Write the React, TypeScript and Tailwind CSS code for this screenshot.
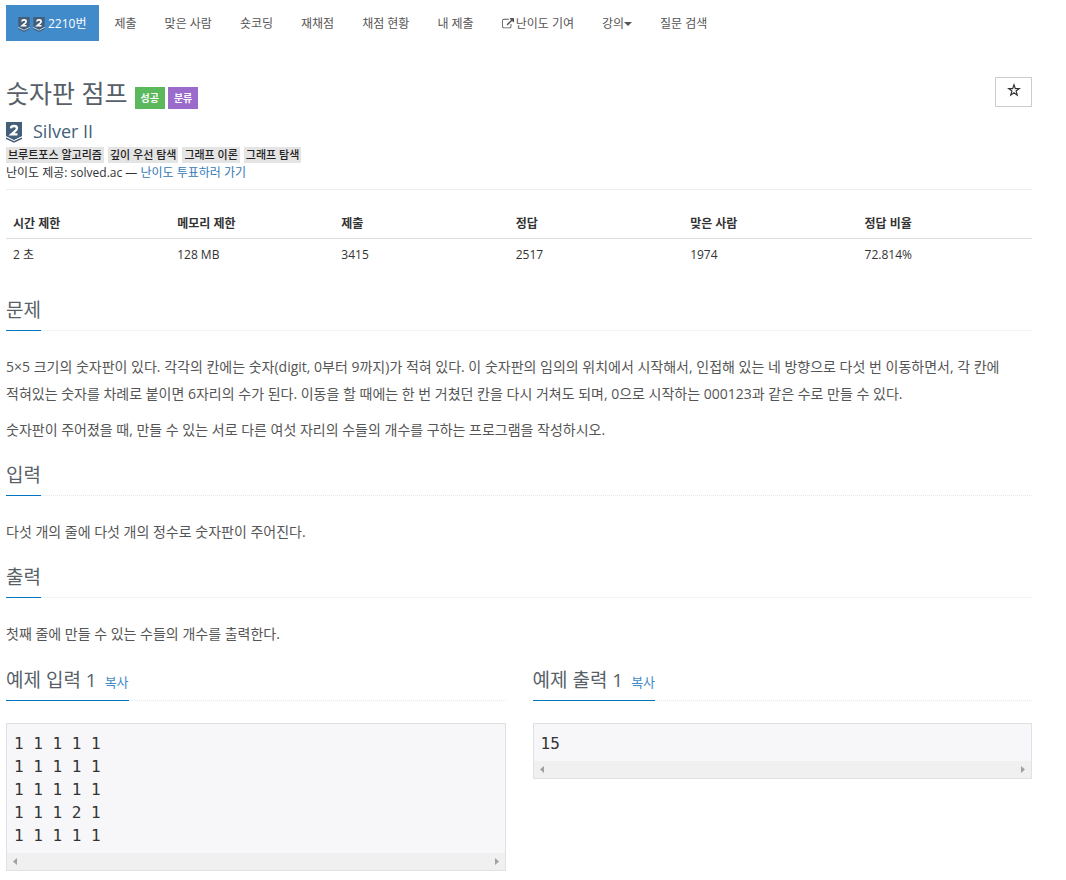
import React from 'react';

const NAV_LEFT = ['제출', '맞은 사람', '숏코딩', '재채점', '채점 현황', '내 제출'];
const TAGS = ['브루트포스 알고리즘', '깊이 우선 탐색', '그래프 이론', '그래프 탐색'];
const INFO = [
  { label: '시간 제한', value: '2 초', width: 'w-[16%]' },
  { label: '메모리 제한', value: '128 MB', width: 'w-[16%]' },
  { label: '제출', value: '3415', width: 'w-[17%]' },
  { label: '정답', value: '2517', width: 'w-[17%]' },
  { label: '맞은 사람', value: '1974', width: 'w-[17%]' },
  { label: '정답 비율', value: '72.814%', width: 'w-[17%]' },
];
const SAMPLE_INPUT = '1 1 1 1 1\n1 1 1 1 1\n1 1 1 1 1\n1 1 1 2 1\n1 1 1 1 1';

const TierIcon: React.FC<{ className: string }> = ({ className }) => (
  <svg viewBox="0 0 16 21" className={className} aria-hidden="true">
    <path d="M0 0h16v14.500L8 18.500 0 14.500z" fill="#435f7a" />
    <path d="M0 14.800l8 4 8-4" fill="none" stroke="#fff" strokeWidth="1.300" />
    <path d="M0 16.200l8 3.800 8-3.800" fill="none" stroke="#435f7a" strokeWidth="1.500" />
    <path d="M4.900 6.300C5.100 4.700 6.300 4 8 4c1.800 0 3 .9 3 2.300 0 1.200-.8 2-2.200 3.100L5.500 12.300h6" fill="none" stroke="#fff" strokeWidth="2.300" />
  </svg>
);

const ExternalLinkIcon = () => (
  <svg viewBox="0 0 1792 1792" className="mr-0.5 size-3" fill="currentColor" aria-hidden="true">
    <path d="M1408 928v320q0 119-84.5 203.5t-203.5 84.5h-832q-119 0-203.5-84.5t-84.5-203.5v-832q0-119 84.5-203.5t203.5-84.5h704q14 0 23 9t9 23v64q0 14-9 23t-23 9h-704q-66 0-113 47t-47 113v832q0 66 47 113t113 47h832q66 0 113-47t47-113v-320q0-14 9-23t23-9h64q14 0 23 9t9 23zm384-864v512q0 26-19 45t-45 19-45-19l-176-176-652 652q-10 10-23 10t-23-10l-114-114q-10-10-10-23t10-23l652-652-176-176q-19-19-19-45t19-45 45-19h512q26 0 45 19t19 45z" />
  </svg>
);

const NavLink: React.FC<{ children: React.ReactNode }> = ({ children }) => (
  <a href="#" className="flex h-9 items-center px-[13px] pt-0.5 whitespace-nowrap hover:bg-gray-100">{children}</a>
);

const Heading: React.FC<{ title: string; copy?: boolean }> = ({ title, copy }) => (
  <div className="mt-4 mb-[22px] flex">
    <div className="flex items-baseline gap-2 border-b border-[#0076bd] pb-1">
      <h2 className="text-[19px] leading-8 text-[#585f69]">{title}</h2>
      {copy && <button type="button" className="cursor-pointer text-[13px] text-[#428bca]">복사</button>}
    </div>
    <div className="flex-1 border-b border-dotted border-[#e4e9f0]" />
  </div>
);

const SampleBox: React.FC<{ text: string }> = ({ text }) => (
  <div className="border border-[#e0e0e5] bg-[#f7f7f9]">
    <pre className="px-[7px] pt-2 pb-1.5 font-['DejaVu_Sans_Mono',monospace] text-base leading-[23px] text-[#333]">{text}</pre>
    {/* horizontal scroll track */}
    <div className="flex h-[17px] items-center justify-between bg-[#f0f0f0] px-1.5 text-[#a0a0a0]">
      <svg viewBox="0 0 4 7" className="h-[7px] w-1" fill="currentColor"><path d="M4 0v7L0 3.500z" /></svg>
      <svg viewBox="0 0 4 7" className="h-[7px] w-1" fill="currentColor"><path d="M0 0v7l4-3.500z" /></svg>
    </div>
  </div>
);

const App: React.FC = () => (
  <div className="bg-white pt-[5px] pr-[34px] pb-2 pl-1.5 font-['Open_Sans','Noto_Sans_CJK_KR',sans-serif] text-xs text-[#333]">
    <nav className="flex gap-0.5 text-[#555]">
      <a href="#" className="mr-px flex h-9 items-center gap-[3px] bg-[#428bca] px-3 pt-0.5 whitespace-nowrap text-white">
        <TierIcon className="h-[15px] w-3" />
        <TierIcon className="h-[15px] w-3" />
        2210번
      </a>
      {NAV_LEFT.map((item) => (
        <NavLink key={item}>{item}</NavLink>
      ))}
      <NavLink>
        <ExternalLinkIcon />
        난이도 기여
      </NavLink>
      <NavLink>
        강의
        <svg viewBox="0 0 8 4" className="h-1 w-2" fill="currentColor" aria-hidden="true"><path d="M0 0h8L4 4z" /></svg>
      </NavLink>
      <NavLink>질문 검색</NavLink>
    </nav>

    <header className="mt-9 border-b border-[#eee] pb-[7px]">
      <div className="flex items-start justify-between">
        <div className="flex items-end">
          <h1 className="mr-[7px] text-[25px] leading-8 text-[#585f69]">숫자판 점프</h1>
          <span className="mr-[3px] bg-[#5cb85c] px-1.5 text-[10px] leading-[22px] font-bold text-white">성공</span>
          <span className="bg-[#9b6bcc] px-1.5 text-[10px] leading-[22px] font-bold text-white">분류</span>
        </div>
        <button type="button" aria-label="즐겨찾기" className="flex h-[30px] w-[37px] items-center justify-center border border-[#ccc]">
          <svg viewBox="0 0 24 24" className="mb-1 size-[14px]" fill="none" stroke="#333" strokeWidth="2" aria-hidden="true">
            <path d="M12 3l2.300 6.600h6.700l-5.400 4.200 2 7L12 16.700l-5.600 4.100 2-7L3 9.600h6.700z" />
          </svg>
        </button>
      </div>
      <div className="mt-2 flex items-center">
        <TierIcon className="mt-0.5 mr-[11px] h-[21px] w-4" />
        <a href="#" className="text-lg leading-7 text-[#435f7a]">Silver II</a>
      </div>
      <ul className="mt-0.5 flex gap-1">
        {TAGS.map((tag) => (
          <li key={tag} className="bg-[#e4e4e4] px-0.5 text-[11px] leading-4 font-medium text-[#222]">{tag}</li>
        ))}
      </ul>
      <p className="mt-px leading-[18px]">
        난이도 제공: solved.ac — <a href="#" className="text-[#337ab7]">난이도 투표하러 가기</a>
      </p>
    </header>

    <table className="mt-[18px] w-full table-fixed text-left">
      <thead>
        <tr className="border-b border-[#ddd]">
          {INFO.map((col) => (
            <th key={col.label} className={`${col.width} px-[7px] pt-[7px] pb-[5px] leading-[18px] font-bold`}>{col.label}</th>
          ))}
        </tr>
      </thead>
      <tbody>
        <tr>
          {INFO.map((col) => (
            <td key={col.label} className="px-[7px] pt-[7px] pb-[5px] leading-[18px]">{col.value}</td>
          ))}
        </tr>
      </tbody>
    </table>

    <main className="pt-[9px] text-sm leading-[27px] break-keep text-[#555]">
      <section>
        <Heading title="문제" />
        <p className="mb-[9px]">
          5×5 크기의 숫자판이 있다. 각각의 칸에는 숫자(digit, 0부터 9까지)가 적혀 있다. 이 숫자판의 임의의 위치에서 시작해서, 인접해 있는 네 방향으로 다섯 번 이동하면서, 각 칸에 적혀있는 숫자를 차례로 붙이면 6자리의 수가 된다. 이동을 할 때에는 한 번 거쳤던 칸을 다시 거쳐도 되며, 0으로 시작하는 000123과 같은 수로 만들 수 있다.
        </p>
        <p>숫자판이 주어졌을 때, 만들 수 있는 서로 다른 여섯 자리의 수들의 개수를 구하는 프로그램을 작성하시오.</p>
      </section>
      <section>
        <Heading title="입력" />
        <p>다섯 개의 줄에 다섯 개의 정수로 숫자판이 주어진다.</p>
      </section>
      <section>
        <Heading title="출력" />
        <p>첫째 줄에 만들 수 있는 수들의 개수를 출력한다.</p>
      </section>
      <div className="grid grid-cols-2 gap-[27px] pt-px">
        <section>
          <Heading title="예제 입력 1" copy />
          <SampleBox text={SAMPLE_INPUT} />
        </section>
        <section>
          <Heading title="예제 출력 1" copy />
          <SampleBox text="15" />
        </section>
      </div>
    </main>
  </div>
);

export default App;
